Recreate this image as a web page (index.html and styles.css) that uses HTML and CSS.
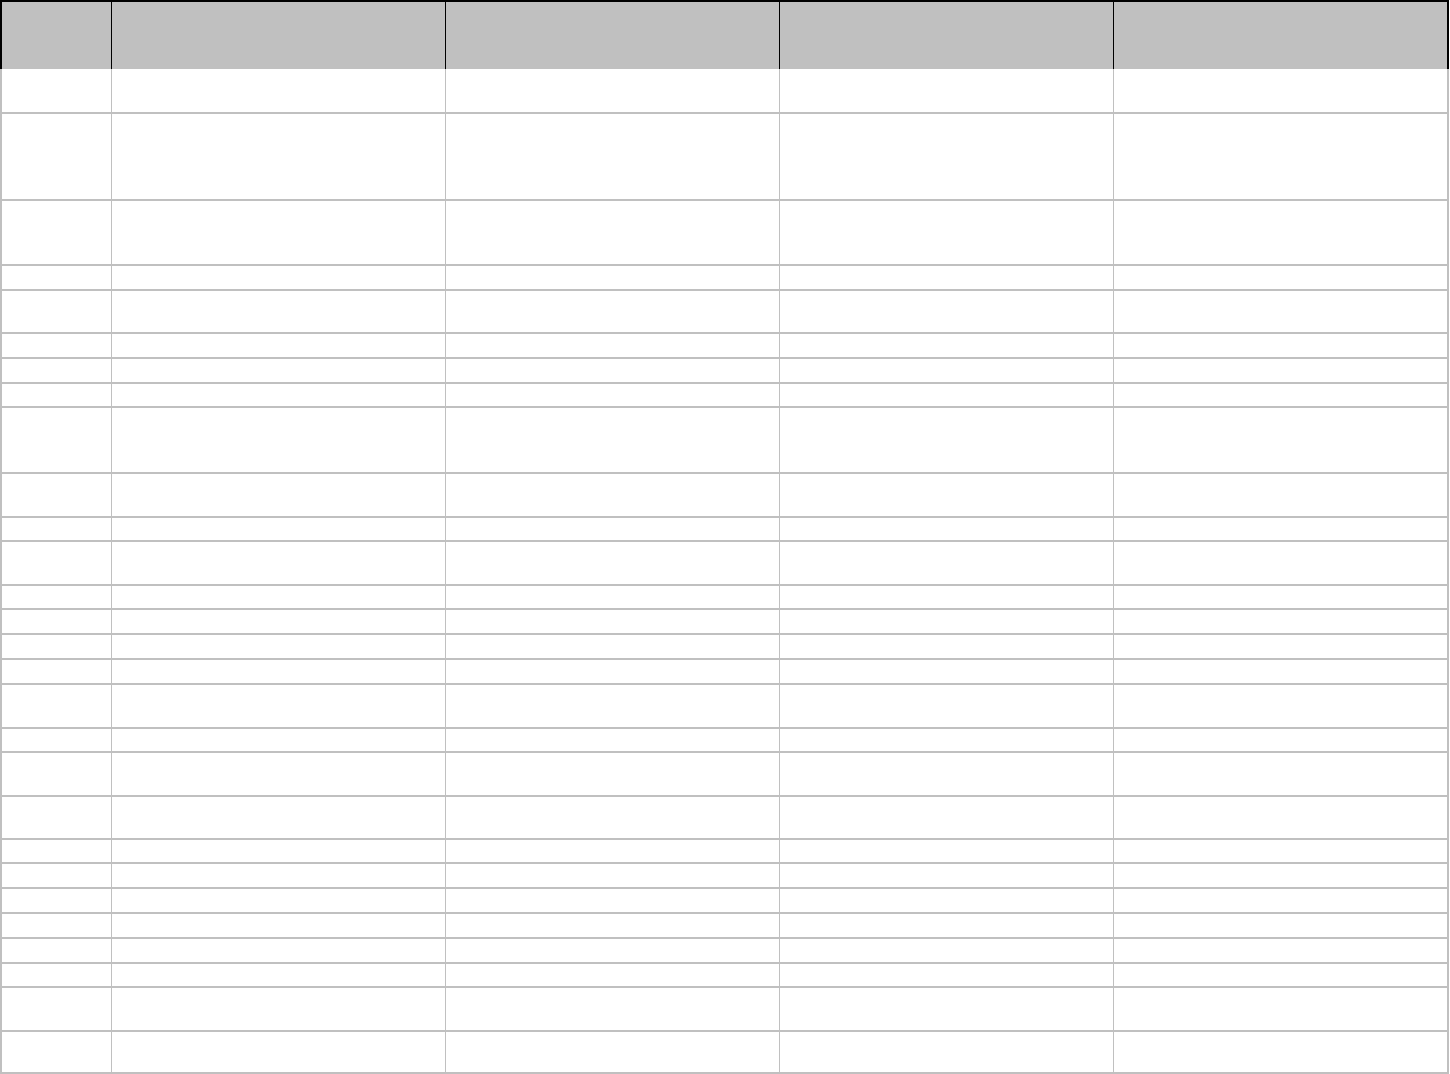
FILE: index.html
```html
<!DOCTYPE html>
<html lang="en">
<head>
<meta charset="utf-8">
<title>Sheet</title>
<link rel="stylesheet" href="styles.css">
</head>
<body>
<div class="sheet">
<div class="h"></div><div class="h"></div><div class="h"></div><div class="h"></div><div class="h"></div>
<div class="c"></div><div class="c"></div><div class="c"></div><div class="c"></div><div class="c"></div>
<div class="c"></div><div class="c"></div><div class="c"></div><div class="c"></div><div class="c"></div>
<div class="c"></div><div class="c"></div><div class="c"></div><div class="c"></div><div class="c"></div>
<div class="c"></div><div class="c"></div><div class="c"></div><div class="c"></div><div class="c"></div>
<div class="c"></div><div class="c"></div><div class="c"></div><div class="c"></div><div class="c"></div>
<div class="c"></div><div class="c"></div><div class="c"></div><div class="c"></div><div class="c"></div>
<div class="c"></div><div class="c"></div><div class="c"></div><div class="c"></div><div class="c"></div>
<div class="c"></div><div class="c"></div><div class="c"></div><div class="c"></div><div class="c"></div>
<div class="c"></div><div class="c"></div><div class="c"></div><div class="c"></div><div class="c"></div>
<div class="c"></div><div class="c"></div><div class="c"></div><div class="c"></div><div class="c"></div>
<div class="c"></div><div class="c"></div><div class="c"></div><div class="c"></div><div class="c"></div>
<div class="c"></div><div class="c"></div><div class="c"></div><div class="c"></div><div class="c"></div>
<div class="c"></div><div class="c"></div><div class="c"></div><div class="c"></div><div class="c"></div>
<div class="c"></div><div class="c"></div><div class="c"></div><div class="c"></div><div class="c"></div>
<div class="c"></div><div class="c"></div><div class="c"></div><div class="c"></div><div class="c"></div>
<div class="c"></div><div class="c"></div><div class="c"></div><div class="c"></div><div class="c"></div>
<div class="c"></div><div class="c"></div><div class="c"></div><div class="c"></div><div class="c"></div>
<div class="c"></div><div class="c"></div><div class="c"></div><div class="c"></div><div class="c"></div>
<div class="c"></div><div class="c"></div><div class="c"></div><div class="c"></div><div class="c"></div>
<div class="c"></div><div class="c"></div><div class="c"></div><div class="c"></div><div class="c"></div>
<div class="c"></div><div class="c"></div><div class="c"></div><div class="c"></div><div class="c"></div>
<div class="c"></div><div class="c"></div><div class="c"></div><div class="c"></div><div class="c"></div>
<div class="c"></div><div class="c"></div><div class="c"></div><div class="c"></div><div class="c"></div>
<div class="c"></div><div class="c"></div><div class="c"></div><div class="c"></div><div class="c"></div>
<div class="c"></div><div class="c"></div><div class="c"></div><div class="c"></div><div class="c"></div>
<div class="c"></div><div class="c"></div><div class="c"></div><div class="c"></div><div class="c"></div>
<div class="c"></div><div class="c"></div><div class="c"></div><div class="c"></div><div class="c"></div>
<div class="c"></div><div class="c"></div><div class="c"></div><div class="c"></div><div class="c"></div>
</div>
</body>
</html>
```

FILE: styles.css
```css
* { box-sizing: border-box; }
html, body {
  margin: 0;
  padding: 0;
  background: #ffffff;
  font-family: "Liberation Sans", Arial, sans-serif;
}
.sheet {
  display: grid;
  width: 1450px;
  grid-template-columns: 112px 334px 334px 334px 335px;
  grid-template-rows: 69px 45px 87px 65px 25px 43px 25px 25px 24px 66px 44px 24px 44px 24px 25px 25px 25px 44px 24px 44px 43px 24px 25px 25px 25px 25px 24px 44px 42px;
}
.h {
  background: #c0c0c0;
  border-top: 2px solid #000000;
  border-right: 1px solid #000000;
}
.h:first-child {
  border-left: 2px solid #000000;
}
.h:nth-child(5) {
  border-right: 2px solid #000000;
}
.c {
  background: #ffffff;
  border-right: 1px solid #c0c0c0;
  border-bottom: 2px solid #c0c0c0;
}
.c:nth-child(5n+1) {
  border-left: 2px solid #c0c0c0;
}
.c:nth-child(5n) {
  border-right: 2px solid #c0c0c0;
}
```
